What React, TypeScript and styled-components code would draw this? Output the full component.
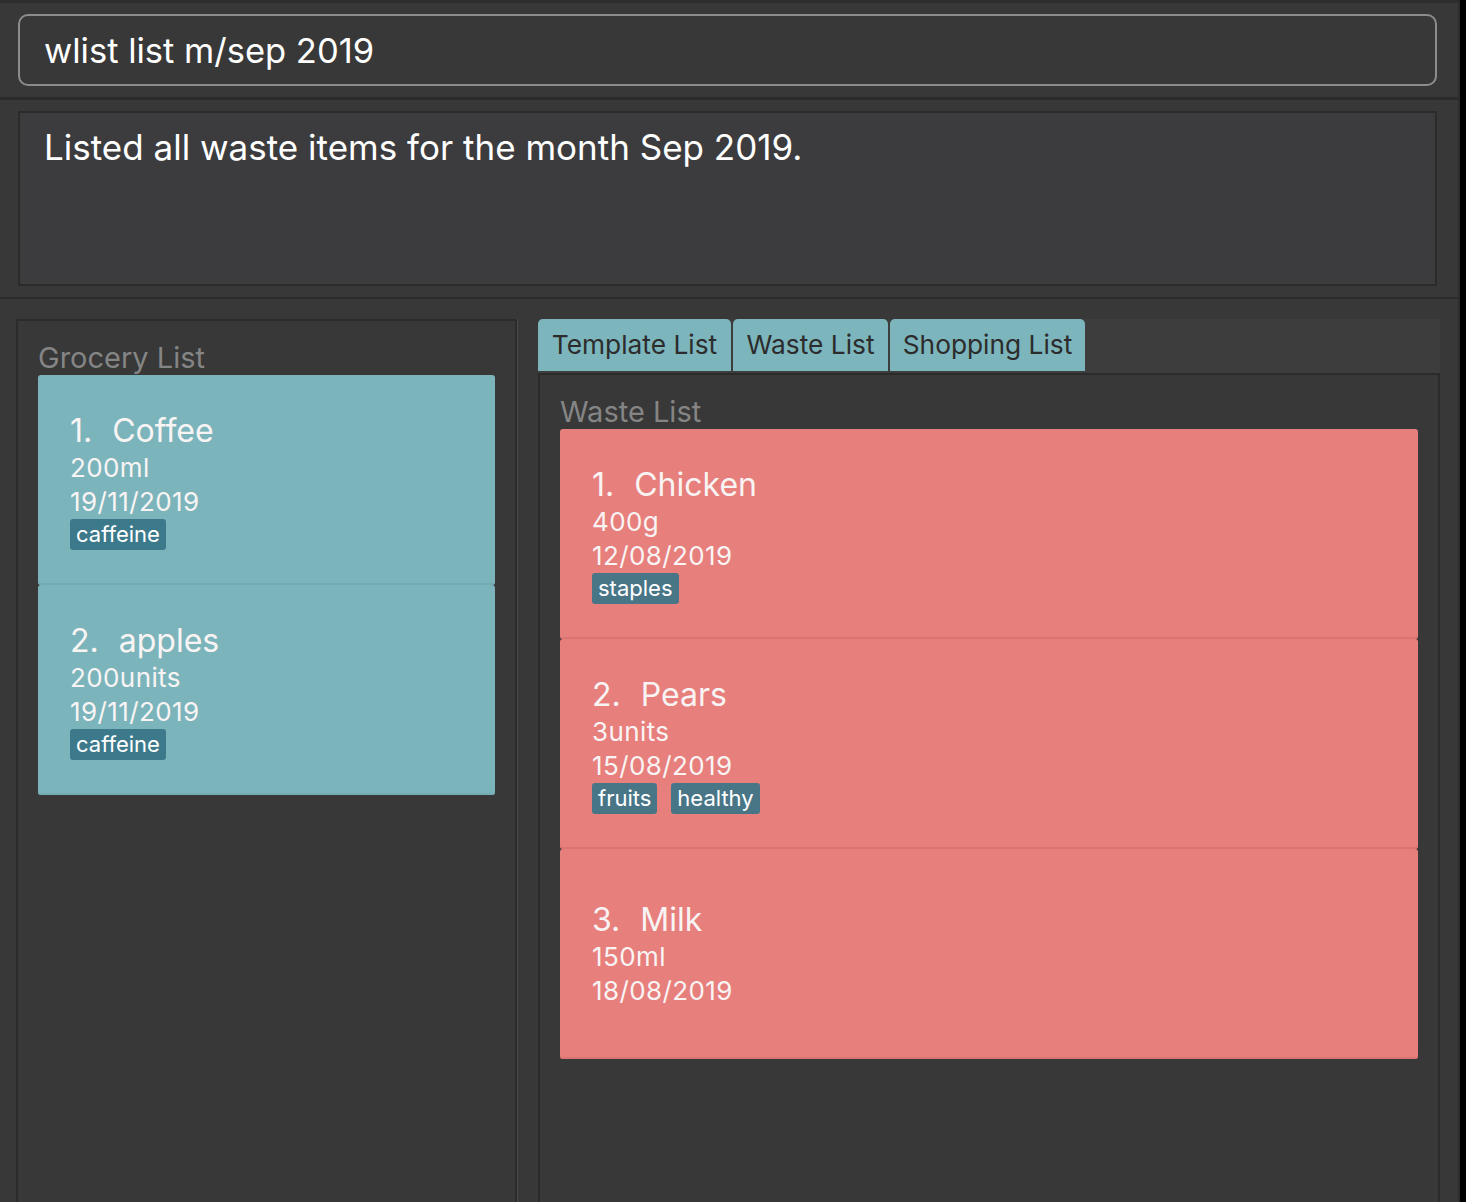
import React from "react";
import styled, { createGlobalStyle } from "styled-components";

const Global = createGlobalStyle`
  html, body { margin: 0; padding: 0; background: #000; }
  body { font-family: Inter, "Open Sans", "Liberation Sans", sans-serif; }
  * { box-sizing: border-box; }
`;

const Screen = styled.div`
  width: 1466px;
  height: 1202px;
  overflow: hidden;
  display: flex;
  background: #000;
`;

const Main = styled.div`
  width: 1460px;
  height: 1202px;
  background: #383838;
  border-top: 3px solid #2d2d2d;
  border-right: 2px solid #2d2d2d;
  display: flex;
  flex-direction: column;
`;

const Section = styled.div`
  padding: 11px 21px 11px 18px;
`;

const Divider = styled.div<{ $h: number }>`
  height: ${(p) => p.$h}px;
  background: #2b2b2b;
`;

const CommandBox = styled.div`
  height: 72px;
  border: 2px solid #8c8c8c;
  border-radius: 10px;
  background: #383838;
  color: #fff;
  font-size: 34.5px;
  display: flex;
  align-items: center;
  padding-left: 24px;
`;

const ResultBox = styled.div`
  height: 175px;
  border: 2px solid #2b2b2b;
  background: #3c3c3e;
  color: #fff;
  font-size: 35px;
  padding: 12px 24px;
  line-height: 44px;
`;

const Lower = styled.div`
  flex: 1;
  display: flex;
  padding: 20px 0 0 16px;
  gap: 21px;
  min-height: 0;
`;

const LeftPanel = styled.div`
  width: 501px;
  border-left: 2px solid #2b2b2b;
  border-top: 2px solid #2b2b2b;
  border-right: 2px solid #2b2b2b;
  box-shadow: 1px 0 0 #4a4a4a;
  padding: 0 20px;
`;

const PanelTitle = styled.div`
  padding-top: 20px;
  height: 54px;
  font-size: 29px;
  line-height: 34px;
  color: #858585;
`;

const CardList = styled.div`
  display: flex;
  flex-direction: column;
`;

const Card = styled.div<{ $bg: string; $edge: string }>`
  height: 210px;
  background: ${(p) => p.$bg};
  padding: 0 32px;
  display: flex;
  flex-direction: column;
  justify-content: center;
  border-radius: 3px;
  box-shadow: inset 0 -2px 0 ${(p) => p.$edge};
  color: #f9f4f4;
`;

const CardTitle = styled.div`
  font-size: 32px;
  line-height: 40px;
  display: flex;
`;

const Index = styled.span`
  margin-right: 20px;
`;

const Detail = styled.div`
  font-size: 26px;
  line-height: 34px;
  letter-spacing: 0.4px;
`;

const Tags = styled.div`
  display: flex;
  gap: 14px;
`;

const Tag = styled.span<{ $bg: string }>`
  height: 31px;
  line-height: 31px;
  padding: 0 6px;
  background: ${(p) => p.$bg};
  border-radius: 3px;
  font-size: 22px;
  color: #fff;
`;

const RightArea = styled.div`
  width: 902px;
  display: flex;
  flex-direction: column;
`;

const TabStrip = styled.div`
  height: 54px;
  background: #3d3d3d;
  display: flex;
  gap: 2px;
  align-items: flex-start;
`;

const TabButton = styled.div<{ $w: number }>`
  width: ${(p) => p.$w}px;
  height: 52px;
  background: #7cb5bc;
  border-radius: 5px 5px 0 0;
  color: #2c2c2c;
  font-size: 26.3px;
  line-height: 52px;
  text-align: center;
`;

const TabPanel = styled.div`
  flex: 1;
  border: 2px solid #2b2b2b;
  border-bottom: none;
  padding: 0 20px;
`;

const teal = "#7cb4bc";
const red = "#e77f7d";

type Item = { index: string; name: string; qty: string; date: string; tags: string[] };

const grocery: Item[] = [
  { index: "1.", name: "Coffee", qty: "200ml", date: "19/11/2019", tags: ["caffeine"] },
  { index: "2.", name: "apples", qty: "200units", date: "19/11/2019", tags: ["caffeine"] },
];

const waste: Item[] = [
  { index: "1.", name: "Chicken", qty: "400g", date: "12/08/2019", tags: ["staples"] },
  { index: "2.", name: "Pears", qty: "3units", date: "15/08/2019", tags: ["fruits", "healthy"] },
  { index: "3.", name: "Milk", qty: "150ml", date: "18/08/2019", tags: [] },
];

function ItemCard({ item, bg, edge, tagBg }: { item: Item; bg: string; edge: string; tagBg: string }) {
  return (
    <Card $bg={bg} $edge={edge}>
      <CardTitle>
        <Index>{item.index}</Index>
        <span>{item.name}</span>
      </CardTitle>
      <Detail>{item.qty}</Detail>
      <Detail>{item.date}</Detail>
      {item.tags.length > 0 && (
        <Tags>
          {item.tags.map((t) => (
            <Tag key={t} $bg={tagBg}>{t}</Tag>
          ))}
        </Tags>
      )}
    </Card>
  );
}

export default function App() {
  return (
    <Screen>
      <Global />
      <Main>
        <Section>
          <CommandBox>wlist list m/sep 2019</CommandBox>
        </Section>
        <Divider $h={3} />
        <Section>
          <ResultBox>Listed all waste items for the month Sep 2019.</ResultBox>
        </Section>
        <Divider $h={2} />
        <Lower>
          <LeftPanel>
            <PanelTitle>Grocery List</PanelTitle>
            <CardList>
              {grocery.map((it) => (
                <ItemCard key={it.name} item={it} bg={teal} edge="#75acb4" tagBg="#3c7a8b" />
              ))}
            </CardList>
          </LeftPanel>
          <RightArea>
            <TabStrip>
              <TabButton $w={193}>Template List</TabButton>
              <TabButton $w={155}>Waste List</TabButton>
              <TabButton $w={195}>Shopping List</TabButton>
            </TabStrip>
            <TabPanel>
              <PanelTitle>Waste List</PanelTitle>
              <CardList>
                {waste.map((it) => (
                  <ItemCard key={it.name} item={it} bg={red} edge="#da7573" tagBg="#497687" />
                ))}
              </CardList>
            </TabPanel>
          </RightArea>
        </Lower>
      </Main>
    </Screen>
  );
}
